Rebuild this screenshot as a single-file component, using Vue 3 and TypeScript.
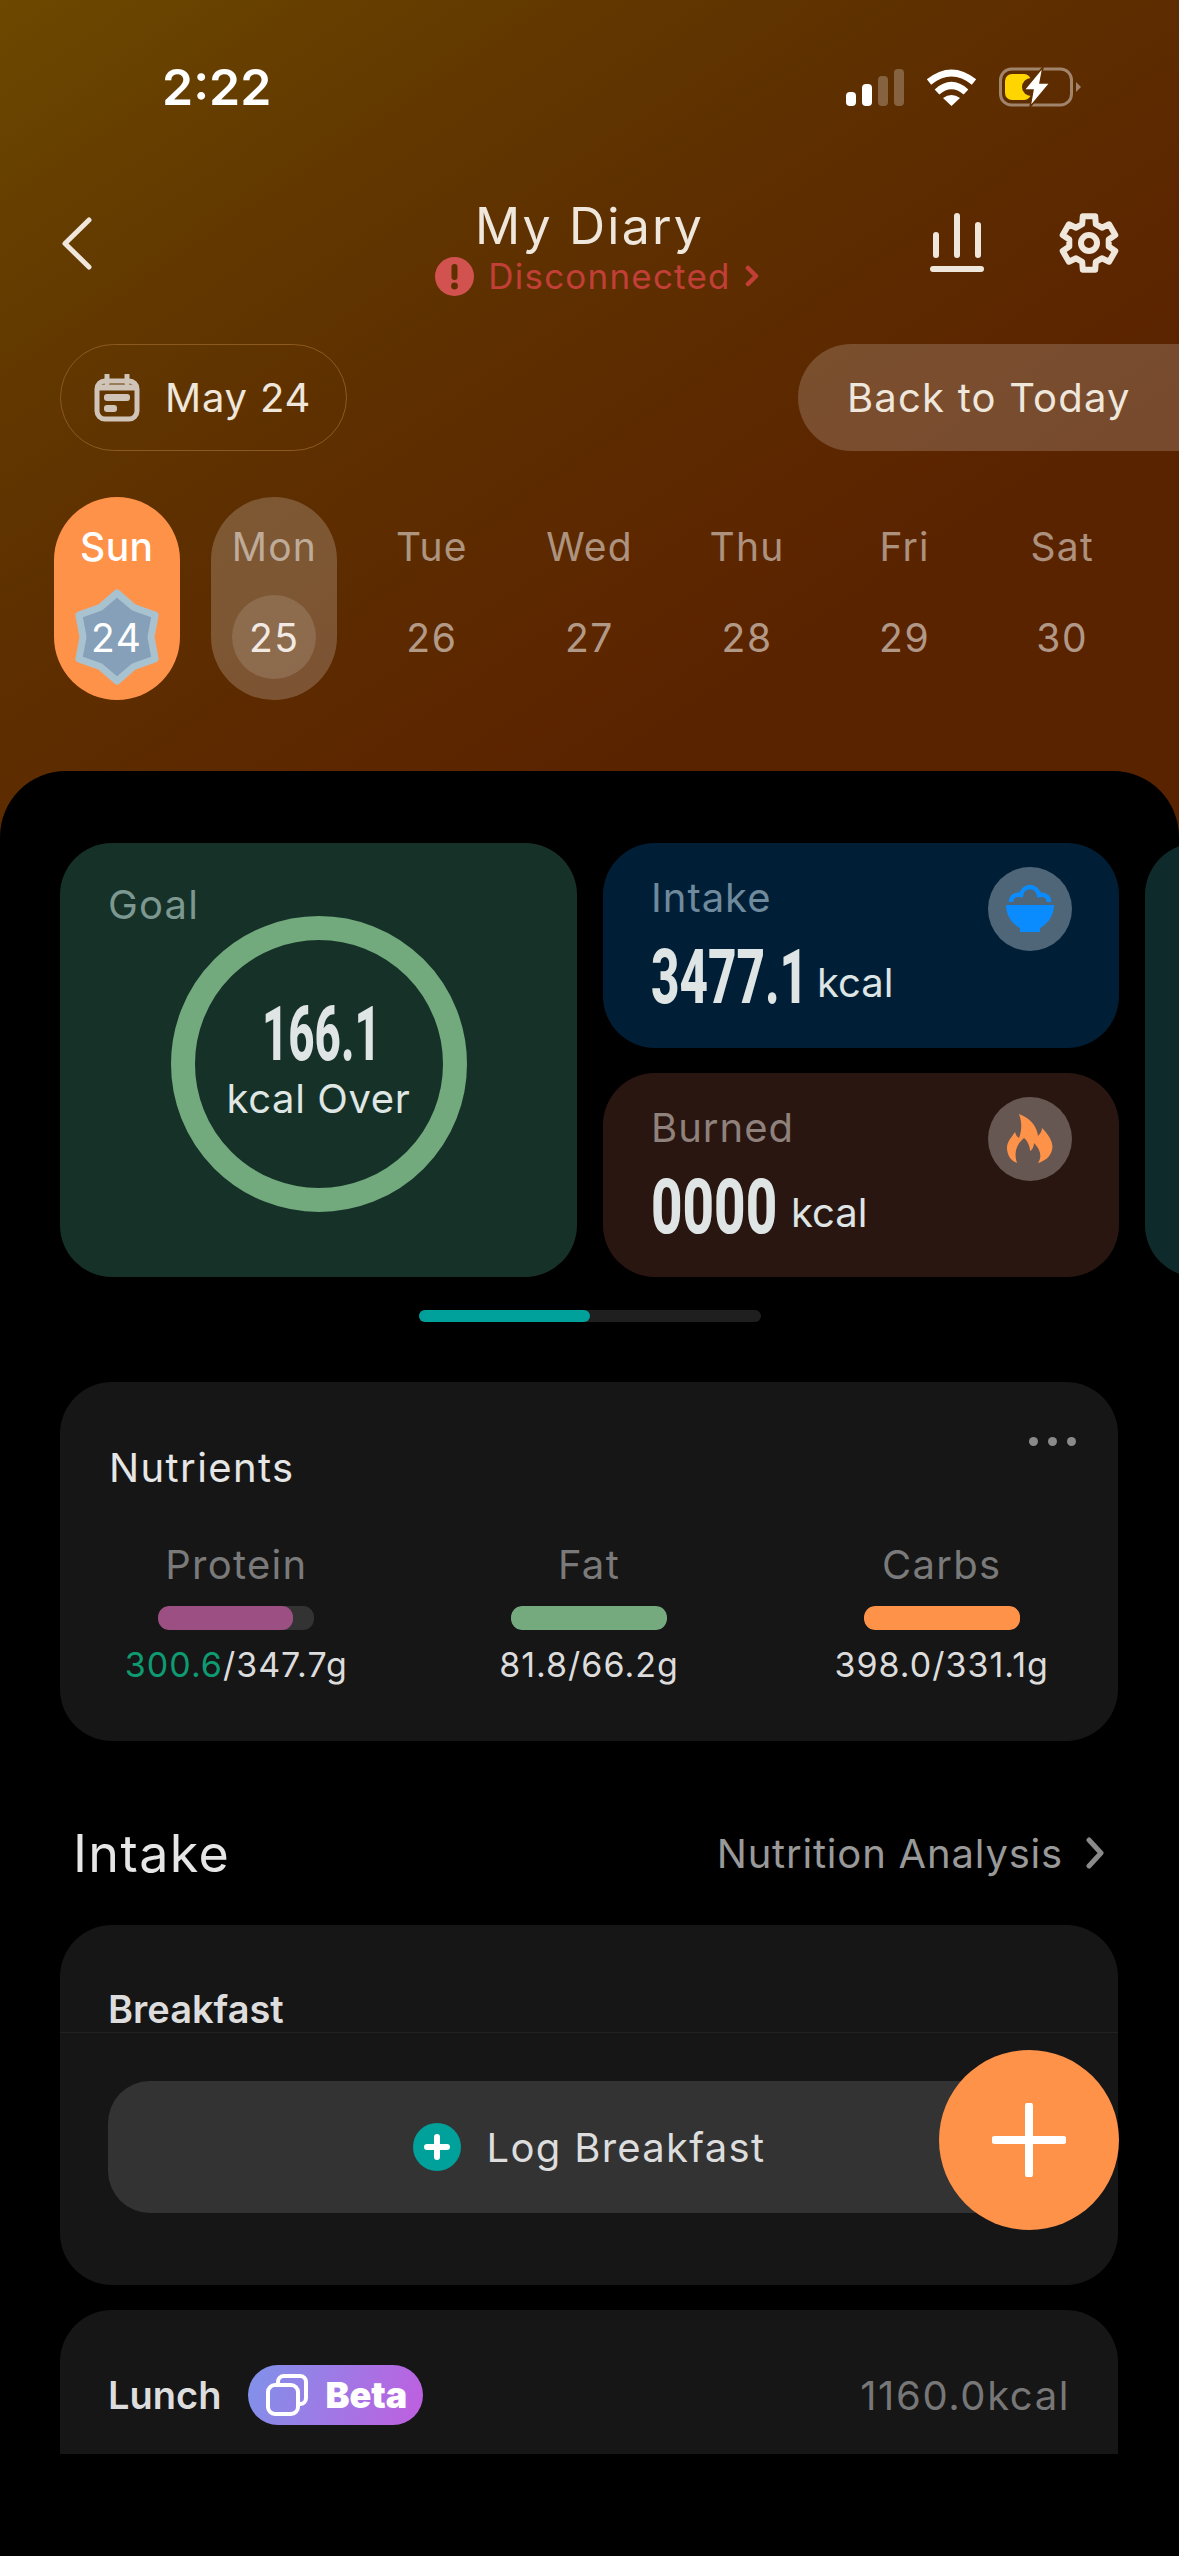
<script setup lang="ts">
const days = [
  { name: 'Sun', num: 24, kind: 'active' },
  { name: 'Mon', num: 25, kind: 'today' },
  { name: 'Tue', num: 26, kind: '' },
  { name: 'Wed', num: 27, kind: '' },
  { name: 'Thu', num: 28, kind: '' },
  { name: 'Fri', num: 29, kind: '' },
  { name: 'Sat', num: 30, kind: '' },
]

function polar(r: number, deg: number, c: number): string {
  const a = (deg * Math.PI) / 180
  return `${(c + r * Math.cos(a)).toFixed(2)} ${(c + r * Math.sin(a)).toFixed(2)}`
}

function gearPath(): string {
  const pts: string[] = []
  for (let i = 0; i < 6; i++) {
    const a = -90 + i * 60
    pts.push(polar(20, a - 20, 30), polar(27.5, a - 13, 30), polar(27.5, a + 13, 30), polar(20, a + 20, 30))
  }
  return 'M' + pts.join('L') + 'Z'
}

function starPath(): string {
  const pts: string[] = []
  for (let i = 0; i < 6; i++) {
    const a = -90 + i * 60
    pts.push(polar(44, a, 48), polar(34, a + 30, 48))
  }
  return 'M' + pts.join('L') + 'Z'
}

const gear = gearPath()
const star = starPath()

const nutrients = [
  { name: 'Protein', fill: 'protein', over: '300.6', rest: '/347.7g' },
  { name: 'Fat', fill: 'fat', over: '', rest: '81.8/66.2g' },
  { name: 'Carbs', fill: 'carbs', over: '', rest: '398.0/331.1g' },
]
</script>

<template>
  <div class="screen">
    <div class="status">
      <span class="time">2:22</span>
      <div class="status-icons">
        <svg class="signal" width="58" height="37" viewBox="0 0 58 37">
          <rect x="0" y="23" width="10" height="14" rx="4" fill="#fff" />
          <rect x="16" y="15" width="10" height="22" rx="4" fill="#fff" />
          <rect x="32" y="7" width="10" height="30" rx="4" fill="#fff" fill-opacity=".25" />
          <rect x="48" y="0" width="10" height="37" rx="4" fill="#fff" fill-opacity=".25" />
        </svg>
        <svg width="51" height="37" viewBox="0 0 51 37" fill="none">
          <path d="M3 13 Q25.5 -5 48 13" stroke="#fff" stroke-width="7" />
          <path d="M11 23 Q25.5 10 40 23" stroke="#fff" stroke-width="7" />
          <path d="M17 29 Q25.5 23 34 29 L25.5 37Z" fill="#fff" />
        </svg>
        <svg width="82" height="42" viewBox="0 0 82 42" fill="none">
          <rect x="1.5" y="3" width="71" height="36" rx="11" stroke="#fff" stroke-opacity=".42" stroke-width="3" />
          <path d="M77 16 L82 21 L77 26Z" fill="#fff" fill-opacity=".42" />
          <rect x="6" y="8" width="26" height="26" rx="7" fill="#ffd500" />
          <circle cx="32" cy="21" r="9" fill="#5f2f00" />
          <path d="M44 1 L25 24 H34 L31 41 L51 17 H41Z" fill="#fff" stroke="#5f2f00" stroke-width="1.5" />
        </svg>
      </div>
    </div>

    <div class="nav">
      <svg class="back" width="33" height="55" viewBox="0 0 33 55" fill="none">
        <path d="M29 4 L5 27.5 L29 51" stroke="#efe6dc" stroke-width="5" stroke-linecap="round" stroke-linejoin="round" />
      </svg>
      <div class="nav-center">
        <span class="title">My Diary</span>
        <span class="sub">
          <svg width="39" height="39" viewBox="0 0 39 39">
            <circle cx="19.5" cy="19.5" r="19.5" fill="#d2524f" />
            <rect x="16.5" y="7" width="6" height="16" rx="3" fill="#5f2f00" />
            <circle cx="19.5" cy="29" r="3.4" fill="#5f2f00" />
          </svg>
          <span class="sub-text">Disconnected</span>
          <svg width="15" height="22" viewBox="0 0 15 22" fill="none">
            <path d="M3 3 L11 11 L3 19" stroke="#c23f38" stroke-width="4.5" stroke-linecap="round" stroke-linejoin="round" />
          </svg>
        </span>
      </div>
      <div class="nav-actions">
        <svg width="54" height="60" viewBox="0 0 54 60" fill="none" stroke="#efe6dc" stroke-linecap="round">
          <path d="M6 22 V42 M27 3 V42 M48 12 V42" stroke-width="6" />
          <path d="M3 56 H51" stroke-width="6" />
        </svg>
        <svg width="60" height="60" viewBox="0 0 60 60" fill="none" stroke="#efe6dc" stroke-width="6" stroke-linejoin="round">
          <path :d="gear" />
          <circle cx="30" cy="30" r="8" />
        </svg>
      </div>
    </div>

    <div class="date-row">
      <div class="date-pill">
        <svg width="46" height="48" viewBox="0 0 46 48" fill="none" stroke="#cfc4b7">
          <rect x="3" y="7" width="40" height="38" rx="8" stroke-width="5" />
          <path d="M13 1 V9 M33 1 V9" stroke-width="5" stroke-linecap="round" />
          <path d="M6 12 H40 V15 H6Z" fill="#cfc4b7" stroke-width="3" />
          <rect x="10" y="20" width="26" height="7" rx="3" fill="#cfc4b7" stroke="none" />
          <rect x="10" y="31" width="13" height="7" rx="3" fill="#cfc4b7" stroke="none" />
        </svg>
        <span>May 24</span>
      </div>
      <div class="today-pill">Back to Today</div>
    </div>

    <div class="days">
      <div v-for="d in days" :key="d.num" class="day">
        <div class="day-pill" :class="d.kind">
          <span class="day-name">{{ d.name }}</span>
          <span class="day-num">
            <svg v-if="d.kind === 'active'" class="star" width="96" height="96" viewBox="0 0 96 96">
              <path :d="star" fill="#85a0b8" stroke="#a9c2d0" stroke-width="7" stroke-linejoin="round" />
            </svg>
            <span class="day-digits">{{ d.num }}</span>
          </span>
        </div>
      </div>
    </div>

    <div class="sheet">
      <div class="scroll">
        <div class="cards">
          <div class="goal">
            <span class="goal-label">Goal</span>
            <div class="ring">
              <span class="num n-goal"><span>166.1</span></span>
              <span class="ring-sub">kcal Over</span>
            </div>
          </div>
          <div class="stat-col">
            <div class="stat intake">
              <div>
                <div class="stat-label">Intake</div>
                <div class="stat-value">
                  <span class="num n-intake"><span>3477.1</span></span>
                  <span class="unit">kcal</span>
                </div>
              </div>
              <div class="stat-icon">
                <svg width="84" height="84" viewBox="0 0 84 84" fill="none">
                  <path d="M23 35 c0 -6 5 -8 10 -7 c1 -5 5 -8 9 -8 s8 3 9 8 c5 -1 10 1 10 7" stroke="#0a8cff" stroke-width="4.5" />
                  <path d="M18 38 H66 C66 50 58 58 52 61 V65 H32 V61 C26 58 18 50 18 38Z" fill="#0a8cff" />
                </svg>
              </div>
            </div>
            <div class="stat burned">
              <div>
                <div class="stat-label">Burned</div>
                <div class="stat-value">
                  <span class="num n-burned"><span>0000</span></span>
                  <span class="unit">kcal</span>
                </div>
              </div>
              <div class="stat-icon">
                <svg width="84" height="84" viewBox="0 0 84 84">
                  <path d="M31 17 C42 21 49 29 50 39 C52 37 54 34 54 31 C61 38 66 46 64 53 C62 60 57 64 50 66 C54 60 53 53 46 46 C46 50 44 53 42 54 C42 50 40 44 36 41 C30 46 25 54 29 66 C23 64 19 58 19 51 C19 44 24 40 27 35 C28 38 29 40 31 41 C34 33 34 25 31 17Z" fill="#ff9249" />
                </svg>
              </div>
            </div>
          </div>
          <div class="peek"></div>
        </div>

        <div class="pager"><div class="pager-fill"></div></div>

        <div class="panel nutrients">
          <div class="dots"><i></i><i></i><i></i></div>
          <div class="panel-title">Nutrients</div>
          <div class="nutrient-grid">
            <div v-for="n in nutrients" :key="n.name" class="nutrient">
              <span class="nutrient-name">{{ n.name }}</span>
              <div class="bar"><div class="bar-fill" :class="n.fill"></div></div>
              <span class="nutrient-val"><span class="over">{{ n.over }}</span>{{ n.rest }}</span>
            </div>
          </div>
        </div>

        <div class="section-head">
          <span class="section-title">Intake</span>
          <span class="section-link">
            Nutrition Analysis
            <svg width="20" height="32" viewBox="0 0 20 32" fill="none">
              <path d="M4 3 L16 16 L4 29" stroke="#8a8a8a" stroke-width="5" stroke-linecap="round" stroke-linejoin="round" />
            </svg>
          </span>
        </div>

        <div class="panel meal">
          <div class="meal-head">Breakfast</div>
          <div class="log">
            <svg width="48" height="48" viewBox="0 0 48 48" fill="none">
              <circle cx="24" cy="24" r="24" fill="#00a19a" />
              <path d="M24 14 V34 M14 24 H34" stroke="#fff" stroke-width="6" stroke-linecap="round" />
            </svg>
            <span>Log Breakfast</span>
          </div>
        </div>

        <div class="panel lunch">
          <div class="lunch-row">
            <span class="lunch-name">Lunch</span>
            <span class="beta">
              <svg width="42" height="42" viewBox="0 0 42 42" fill="none" stroke="#fff" stroke-width="4">
                <path d="M12 10 V8 a6 6 0 0 1 6 -6 h16 a6 6 0 0 1 6 6 v16 a6 6 0 0 1 -6 6 h-2" />
                <rect x="2" y="11" width="30" height="29" rx="7" />
              </svg>
              <span>Beta</span>
            </span>
            <span class="lunch-kcal">1160.0kcal</span>
          </div>
        </div>
      </div>

      <div class="fab">
        <svg width="74" height="74" viewBox="0 0 74 74" fill="none">
          <path d="M37 3 V71 M3 37 H71" stroke="#fff" stroke-width="8" stroke-linecap="round" />
        </svg>
      </div>
    </div>
  </div>
</template>

<style scoped>
.screen {
  width: 1179px;
  height: 2556px;
  overflow: hidden;
  display: flex;
  flex-direction: column;
  background: linear-gradient(146deg, #6c4800 0, #633a00 280px, #5e3000 520px, #5c2600 860px, #5a2300 1000px);
  background-repeat: no-repeat;
  font-family: Inter, "Liberation Sans", sans-serif;
  letter-spacing: 1.2px;
  color: #efe6dc;
}
.status {
  height: 174px;
  flex: none;
  display: flex;
  align-items: center;
  justify-content: space-between;
  padding: 0 98px 0 162px;
}
.time {
  font-size: 50px;
  font-weight: 600;
  letter-spacing: 0;
  color: #fff;
}
.status-icons {
  display: flex;
  align-items: center;
  gap: 22px;
}
.nav {
  height: 104px;
  margin-top: 17px;
  flex: none;
  display: grid;
  grid-template-columns: 1fr auto 1fr;
  grid-template-rows: 104px;
  align-items: center;
  padding: 0 60px;
}
.nav-center {
  align-self: start;
  display: flex;
  flex-direction: column;
  align-items: center;
  padding-top: 5px;
}
.title {
  font-size: 50px;
  line-height: 60px;
  font-weight: 400;
  letter-spacing: 2.2px;
  color: #efe6dc;
}
.sub {
  height: 44px;
  margin-top: -2px;
  padding-left: 16px;
  display: flex;
  align-items: center;
  gap: 14px;
}
.sub-text {
  font-size: 35px;
  letter-spacing: 1.2px;
  color: #c23f38;
}
.nav-actions {
  display: flex;
  justify-content: flex-end;
  align-items: center;
  gap: 75px;
}
.date-row {
  margin-top: 49px;
  flex: none;
  display: flex;
  justify-content: space-between;
  padding-left: 60px;
}
.date-pill {
  width: 287px;
  height: 107px;
  box-sizing: border-box;
  border: 1.5px solid #8a5a20;
  border-radius: 54px;
  display: flex;
  align-items: center;
  gap: 25px;
  padding-left: 33px;
  font-size: 40px;
  letter-spacing: 0.8px;
}
.today-pill {
  width: 381px;
  height: 107px;
  box-sizing: border-box;
  padding-left: 49px;
  display: flex;
  align-items: center;
  border-radius: 54px 0 0 54px;
  background: rgba(255, 255, 255, 0.18);
  font-size: 40px;
}
.days {
  margin-top: 46px;
  padding: 0 38px;
  flex: none;
  display: grid;
  grid-template-columns: repeat(7, 1fr);
}
.day {
  display: flex;
  justify-content: center;
}
.day-pill {
  width: 126px;
  height: 203px;
  border-radius: 63px;
  display: flex;
  flex-direction: column;
  align-items: center;
  padding-top: 26px;
  box-sizing: border-box;
}
.day-pill.active {
  background: #ff9249;
}
.day-pill.today {
  background: rgba(255, 255, 255, 0.2);
}
.day-name {
  font-size: 39px;
  line-height: 48px;
  color: rgba(255, 255, 255, 0.5);
}
.active .day-name {
  color: #fff;
  font-weight: 500;
  letter-spacing: 0.4px;
}
.day-num {
  margin-top: 24px;
  width: 84px;
  height: 84px;
  border-radius: 50%;
  position: relative;
  display: flex;
  align-items: center;
  justify-content: center;
  font-size: 39px;
  letter-spacing: 1.6px;
  color: rgba(255, 255, 255, 0.55);
}
.today .day-num {
  background: rgba(255, 255, 255, 0.13);
  color: #f1e9e2;
}
.active .day-num {
  color: #fff;
}
.star {
  position: absolute;
  left: -6px;
  top: -6px;
}
.day-digits {
  position: relative;
}
.sheet {
  margin-top: 71px;
  flex: 1;
  position: relative;
  background: #000;
  border-radius: 66px 66px 0 0;
}
.scroll {
  height: 1683px;
  overflow: hidden;
  padding-top: 72px;
  box-sizing: border-box;
}
.cards {
  display: flex;
  gap: 26px;
  padding-left: 60px;
  height: 434px;
}
.goal {
  width: 517px;
  flex: none;
  display: grid;
  background: #163228;
  border-radius: 52px;
  padding-top: 8px;
  box-sizing: border-box;
}
.goal > * {
  grid-area: 1 / 1;
}
.goal-label {
  margin: 30px 0 0 48px;
  font-size: 40px;
  line-height: 48px;
  color: #7c9890;
}
.ring {
  width: 296px;
  height: 296px;
  box-sizing: border-box;
  border: 24px solid #72aa7e;
  border-radius: 50%;
  align-self: center;
  justify-self: center;
  display: flex;
  flex-direction: column;
  align-items: center;
  padding-top: 64px;
}
.ring-sub {
  margin-top: 11px;
  font-size: 40px;
  line-height: 48px;
  letter-spacing: 0.6px;
  color: #dfe6e3;
  white-space: nowrap;
}
.num {
  display: block;
  height: 60px;
  flex: none;
  font-family: Roboto, "Liberation Sans", sans-serif;
  font-size: 76px;
  font-weight: 800;
  line-height: 60px;
  letter-spacing: 0;
  color: #dfe5e4;
  white-space: nowrap;
}
.num > span {
  display: inline-block;
  transform-origin: left center;
}
.n-goal {
  width: 113px;
}
.n-goal > span {
  transform: scaleX(0.6);
}
.n-intake {
  width: 150px;
}
.n-intake > span {
  transform: scaleX(0.65);
}
.n-burned {
  width: 124px;
}
.n-burned > span {
  transform: scaleX(0.72);
}
.stat-col {
  width: 516px;
  flex: none;
  display: flex;
  flex-direction: column;
  gap: 25px;
}
.stat {
  height: 204.5px;
  box-sizing: border-box;
  border-radius: 52px;
  padding: 24px 47px 0 48px;
  display: flex;
  justify-content: space-between;
}
.intake {
  background: #001f36;
}
.burned {
  background: #2a1610;
}
.stat-label {
  margin-top: 7px;
  font-size: 40px;
  line-height: 48px;
  letter-spacing: 1px;
}
.intake .stat-label {
  color: #6f8a9d;
}
.burned .stat-label {
  color: #8f817c;
}
.stat-value {
  margin-top: 25px;
  display: flex;
  align-items: flex-end;
  gap: 16px;
}
.unit {
  font-size: 40px;
  line-height: 48px;
  letter-spacing: 0;
  color: #dfe5e4;
}
.stat-icon {
  width: 84px;
  height: 84px;
  border-radius: 50%;
}
.intake .stat-icon {
  background: #4f6678;
}
.burned .stat-icon {
  background: #665753;
}
.peek {
  width: 300px;
  flex: none;
  background: #0f2a2b;
  border-radius: 52px;
}
.pager {
  margin: 33px auto 0;
  width: 342px;
  height: 12px;
  border-radius: 6px;
  background: #1f1f1f;
}
.pager-fill {
  width: 171px;
  height: 12px;
  border-radius: 6px;
  background: #00a19a;
}
.panel {
  margin: 0 61px 0 60px;
  background: #161616;
  border-radius: 52px;
}
.nutrients {
  margin-top: 60px;
  height: 359px;
  position: relative;
  box-sizing: border-box;
  padding-top: 62px;
}
.dots {
  position: absolute;
  top: 55px;
  right: 42px;
  display: flex;
  gap: 10px;
}
.dots i {
  width: 9px;
  height: 9px;
  border-radius: 50%;
  background: #8a8a8a;
}
.panel-title {
  padding-left: 49px;
  font-size: 40px;
  line-height: 48px;
  font-weight: 400;
  letter-spacing: 1.4px;
  color: #e6e6e6;
}
.nutrient-grid {
  margin-top: 49px;
  display: grid;
  grid-template-columns: repeat(3, 1fr);
}
.nutrient {
  display: flex;
  flex-direction: column;
  align-items: center;
}
.nutrient-name {
  font-size: 40px;
  line-height: 48px;
  letter-spacing: 1.3px;
  color: #7a7a7a;
}
.bar {
  margin-top: 17px;
  width: 156px;
  height: 24px;
  border-radius: 11px;
  background: #333;
  overflow: hidden;
}
.bar-fill {
  height: 24px;
  border-radius: 11px;
}
.protein {
  width: 135px;
  background: #9c4f82;
}
.fat {
  width: 156px;
  background: #75aa7e;
}
.carbs {
  width: 157px;
  background: #ff9249;
}
.nutrient-val {
  margin-top: 13px;
  font-size: 34px;
  line-height: 44px;
  letter-spacing: 1px;
  color: #dcdcdc;
  white-space: nowrap;
}
.over {
  color: #0e9b72;
}
.section-head {
  margin-top: 82px;
  height: 60px;
  padding: 0 74px 0 73px;
  display: flex;
  justify-content: space-between;
  align-items: center;
}
.section-title {
  font-size: 52px;
  font-weight: 400;
  letter-spacing: 1.4px;
  color: #e6e6e6;
}
.section-link {
  display: flex;
  align-items: center;
  gap: 22px;
  font-size: 40px;
  letter-spacing: 0.8px;
  color: #999;
}
.meal {
  margin-top: 42px;
  height: 360px;
}
.meal-head {
  padding: 60px 0 0 48px;
  height: 108px;
  box-sizing: border-box;
  border-bottom: 1.5px solid #222;
  font-size: 38px;
  line-height: 48px;
  font-weight: 600;
  letter-spacing: 0;
  color: #ddd;
}
.log {
  margin: 48px 48px 0;
  height: 132px;
  border-radius: 42px;
  background: #333;
  display: flex;
  align-items: center;
  justify-content: center;
  gap: 26px;
  font-size: 40px;
  letter-spacing: 1.3px;
  color: #ddd;
}
.lunch {
  margin-top: 25px;
  height: 240px;
  padding: 55px 48px 0 48px;
}
.lunch-row {
  display: flex;
  align-items: center;
  height: 60px;
  gap: 27px;
}
.lunch-name {
  font-size: 38px;
  font-weight: 600;
  letter-spacing: 0;
  color: #ddd;
}
.beta {
  width: 175px;
  height: 60px;
  box-sizing: border-box;
  border-radius: 30px;
  background: linear-gradient(110deg, #7f93ea, #c05ee0);
  display: flex;
  align-items: center;
  gap: 17px;
  padding-left: 18px;
  font-size: 36px;
  font-weight: 900;
  letter-spacing: 0;
  color: #fff;
}
.lunch-kcal {
  margin-left: auto;
  font-size: 40px;
  letter-spacing: 1.6px;
  color: #777;
}
.fab {
  position: absolute;
  top: 1279px;
  left: 939px;
  width: 180px;
  height: 180px;
  border-radius: 50%;
  background: #ff9249;
  display: flex;
  align-items: center;
  justify-content: center;
}
</style>
